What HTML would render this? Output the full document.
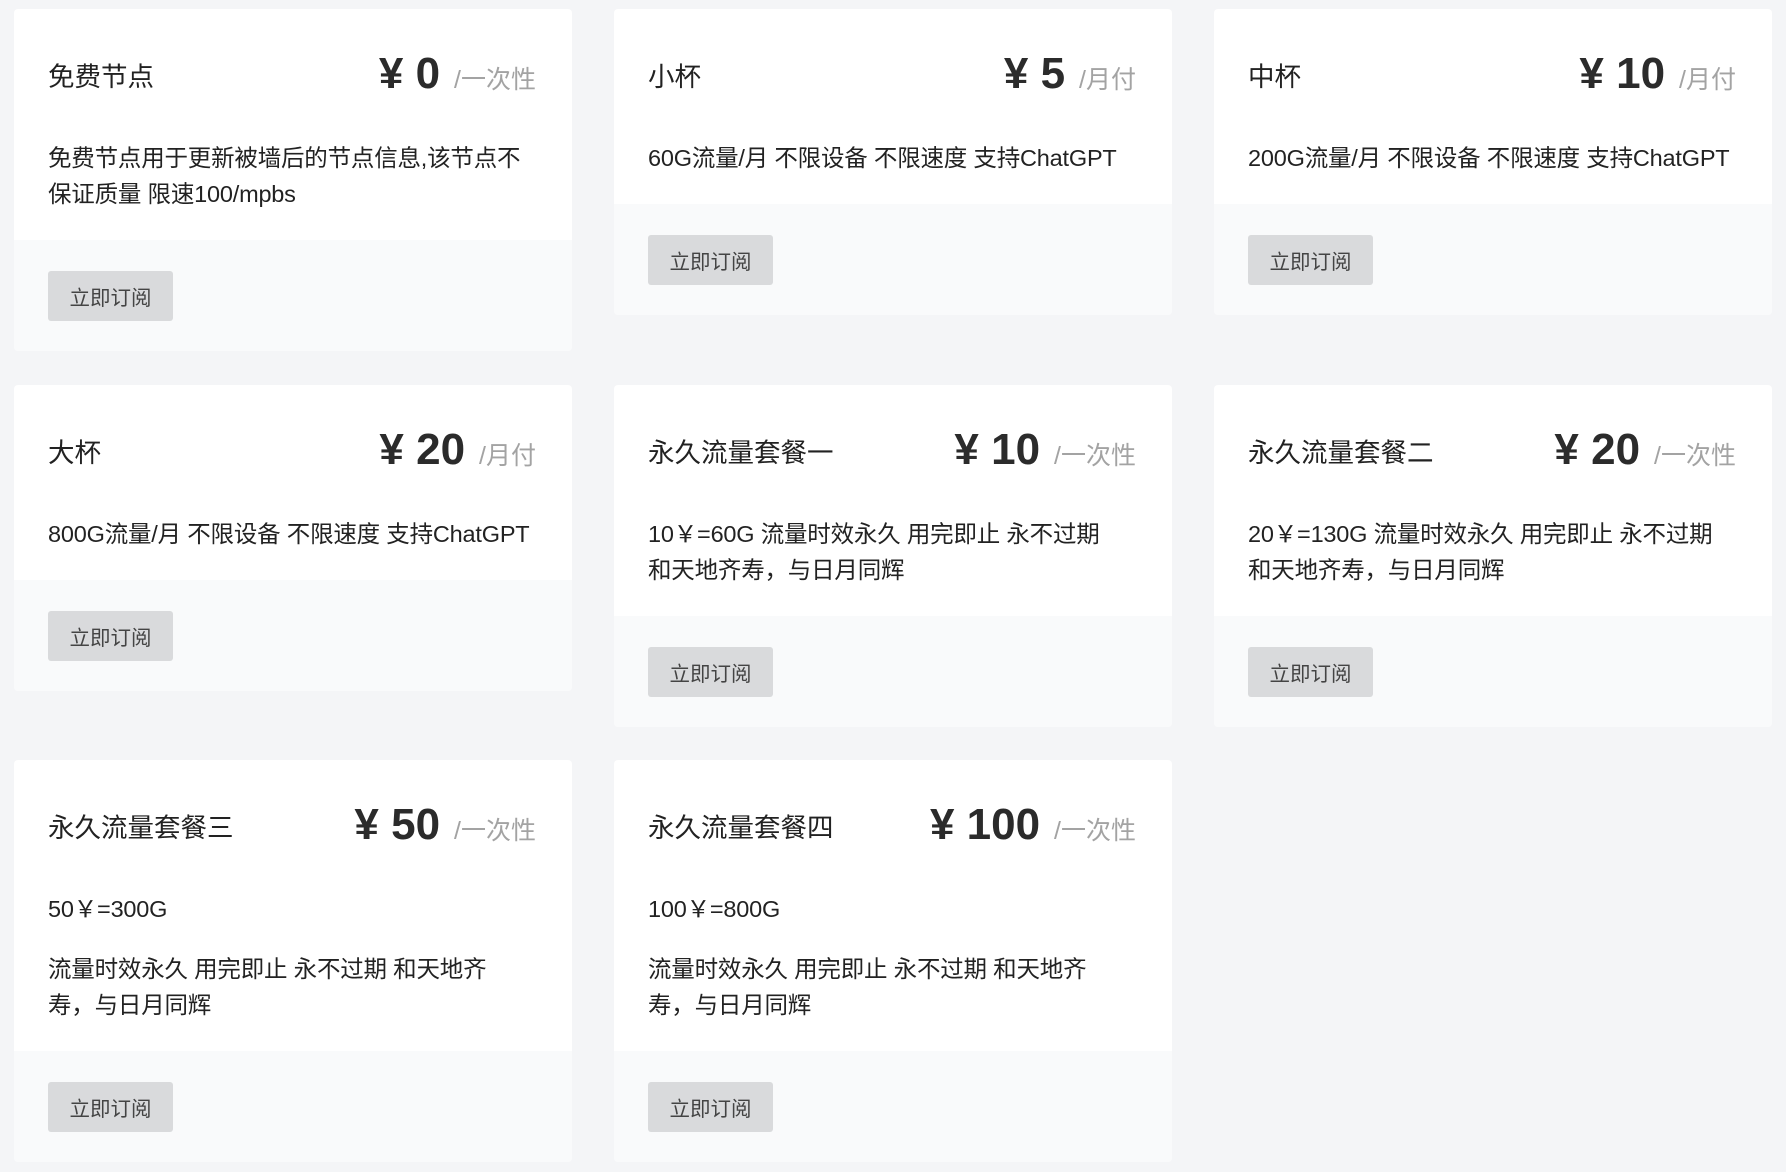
<!DOCTYPE html>
<html><head><meta charset="utf-8"><style>
*{margin:0;padding:0;box-sizing:border-box}
body{width:1786px;height:1172px;background:#f4f5f7;font-family:"Liberation Sans","Noto Sans CJK SC",sans-serif;color:#222;position:relative;overflow:hidden}
.card{position:absolute;width:558px;background:#fff;border-radius:4px;overflow:hidden}
.body{padding:34px 36px 28px 34px}
.hd{display:flex;justify-content:space-between;align-items:center;height:62px}
.t{font-size:26.5px;color:#222}
.p{font-size:44px;font-weight:bold;color:#2b2b2b;white-space:nowrap}
.p span{font-size:25px;font-weight:normal;color:#a3a3a3;margin-left:14px}
.d{margin-top:35px;font-size:23.5px;line-height:36px;color:#222;letter-spacing:-0.2px}
.d p+p{margin-top:24px}
.ft{background:#f9fafb;padding:31px 34px 30px}
.btn{width:125px;height:50px;background:#d9dadc;border-radius:3px;font-size:20.5px;color:#444;display:flex;align-items:center;justify-content:center}
</style></head><body>

<div class="card" style="left:14px;top:9px"><div class="body"><div class="hd"><div class="t">免费节点</div><div class="p">¥ 0<span>/一次性</span></div></div><div class="d">免费节点用于更新被墙后的节点信息,该节点不保证质量 限速100/mpbs</div></div><div class="ft"><div class="btn">立即订阅</div></div></div>

<div class="card" style="left:614px;top:9px"><div class="body"><div class="hd"><div class="t">小杯</div><div class="p">¥ 5<span>/月付</span></div></div><div class="d">60G流量/月 不限设备 不限速度 支持ChatGPT</div></div><div class="ft"><div class="btn">立即订阅</div></div></div>

<div class="card" style="left:1214px;top:9px"><div class="body"><div class="hd"><div class="t">中杯</div><div class="p">¥ 10<span>/月付</span></div></div><div class="d">200G流量/月 不限设备 不限速度 支持ChatGPT</div></div><div class="ft"><div class="btn">立即订阅</div></div></div>

<div class="card" style="left:14px;top:385px"><div class="body"><div class="hd"><div class="t">大杯</div><div class="p">¥ 20<span>/月付</span></div></div><div class="d">800G流量/月 不限设备 不限速度 支持ChatGPT</div></div><div class="ft"><div class="btn">立即订阅</div></div></div>

<div class="card" style="left:614px;top:385px"><div class="body"><div class="hd"><div class="t">永久流量套餐一</div><div class="p">¥ 10<span>/一次性</span></div></div><div class="d">10￥=60G 流量时效永久 用完即止 永不过期<br>和天地齐寿，与日月同辉</div></div><div class="ft"><div class="btn">立即订阅</div></div></div>

<div class="card" style="left:1214px;top:385px"><div class="body"><div class="hd"><div class="t">永久流量套餐二</div><div class="p">¥ 20<span>/一次性</span></div></div><div class="d">20￥=130G 流量时效永久 用完即止 永不过期<br>和天地齐寿，与日月同辉</div></div><div class="ft"><div class="btn">立即订阅</div></div></div>

<div class="card" style="left:14px;top:760px"><div class="body"><div class="hd"><div class="t">永久流量套餐三</div><div class="p">¥ 50<span>/一次性</span></div></div><div class="d"><p>50￥=300G</p><p>流量时效永久 用完即止 永不过期 和天地齐<br>寿，与日月同辉</p></div></div><div class="ft"><div class="btn">立即订阅</div></div></div>

<div class="card" style="left:614px;top:760px"><div class="body"><div class="hd"><div class="t">永久流量套餐四</div><div class="p">¥ 100<span>/一次性</span></div></div><div class="d"><p>100￥=800G</p><p>流量时效永久 用完即止 永不过期 和天地齐<br>寿，与日月同辉</p></div></div><div class="ft"><div class="btn">立即订阅</div></div></div>

</body></html>
